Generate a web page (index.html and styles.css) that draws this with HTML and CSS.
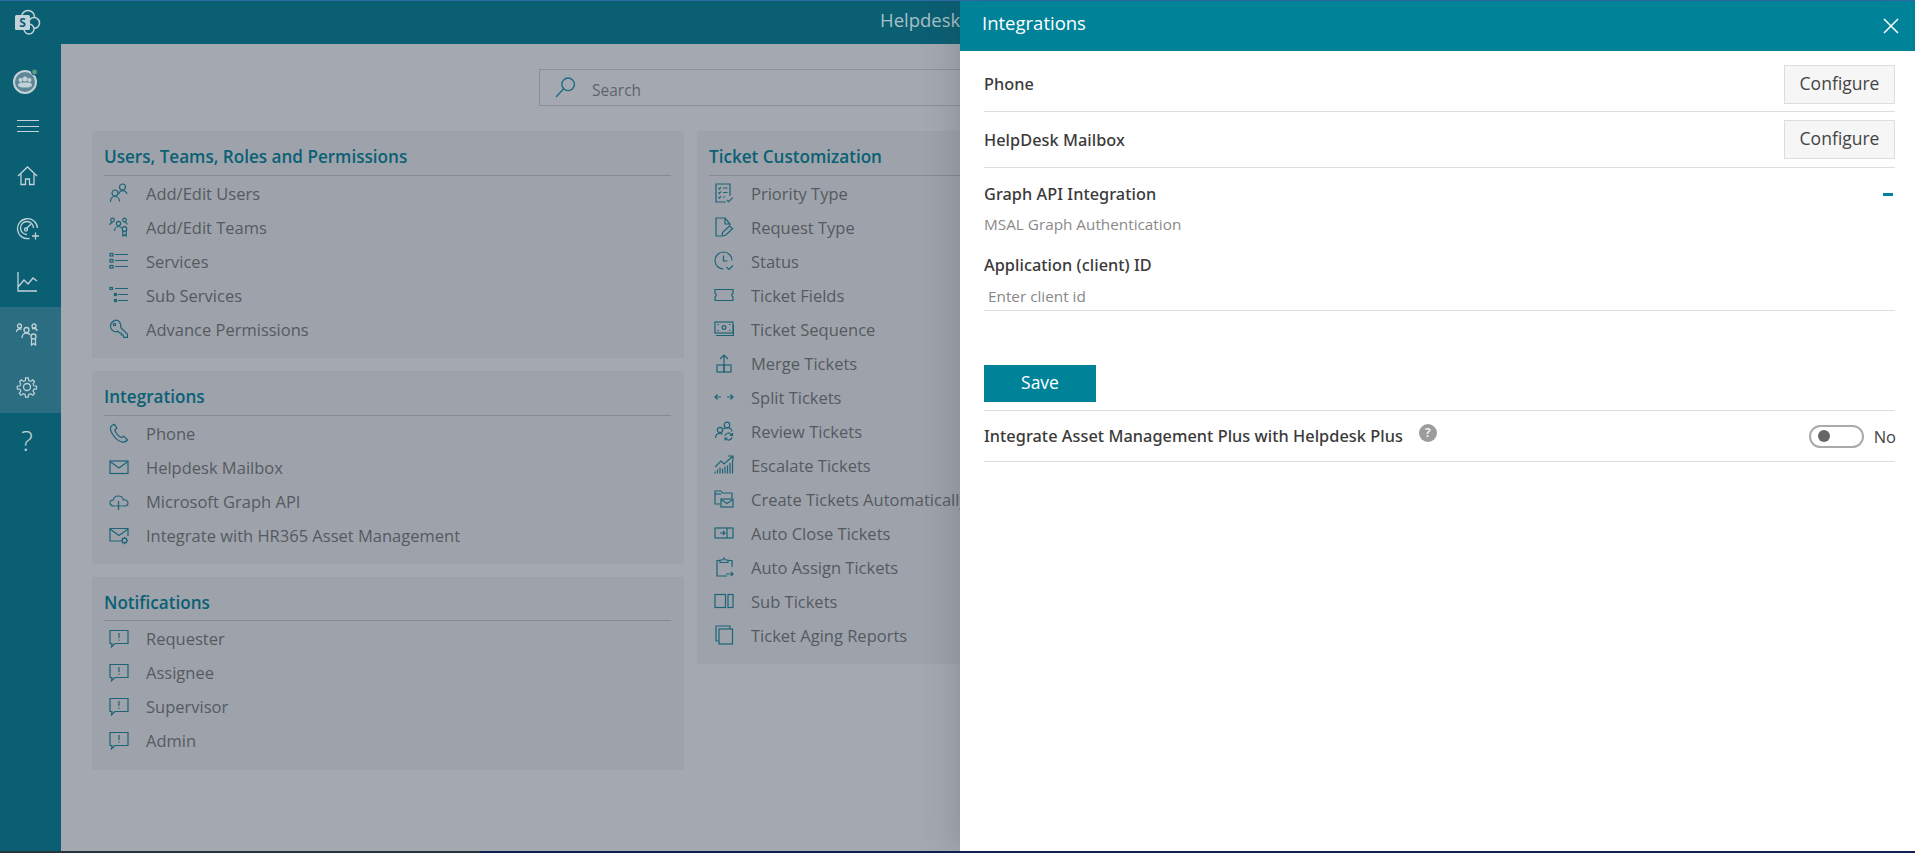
FILE: index.html
```html
<!DOCTYPE html>
<html lang="en">
<head>
  <meta charset="UTF-8">
  <meta name="viewport" content="width=device-width, initial-scale=1.0">
  <title>Helpdesk Plus - Integrations</title>
  <link rel="stylesheet" href="styles.css">
</head>
<body>
  <svg class="sprite" xmlns="http://www.w3.org/2000/svg">
    <symbol id="i-user" viewBox="0 0 20 20"><circle cx="13.500" cy="4" r="3"/><path d="M10 11c.4-2 1.800-3.300 3.700-3.300s3.600 1.300 4.300 3.300"/><circle cx="6" cy="10" r="3"/><path d="M1.500 19c0-3.400 2-5.500 4.500-5.500s4.500 2.100 4.500 5"/></symbol>
    <symbol id="i-team" viewBox="0 0 20 20"><circle cx="3.500" cy="3" r="1.800"/><circle cx="15.500" cy="3" r="1.800"/><circle cx="9.500" cy="6.500" r="2.200"/><path d="M1 8c0-1.500 1-2.400 2.500-2.400M18 7.500c0-1.300-1-2-2.500-2M5.500 14c0-2.500 1.800-4.500 4-4.500 1.200 0 2.300.6 3 1.500"/><circle cx="15.500" cy="12" r="2.300"/><path d="M13.800 14v5l1.700-1.300 1.700 1.300v-5"/></symbol>
    <symbol id="i-list" viewBox="0 0 20 20"><path d="M6 3.500h13M6 9.500h13M6 15.500h13"/><rect x="1" y="2.500" width="3" height="2.500"/><rect x="1" y="8.500" width="3" height="2.500"/><rect x="1" y="14.500" width="3" height="2.500"/></symbol>
    <symbol id="i-sublist" viewBox="0 0 20 20"><path d="M6 3.500h13M9 9.500h10M9 15.500h10"/><rect x="1" y="2.500" width="2.500" height="2"/><rect x="5.500" y="8.500" width="2" height="2"/><rect x="5.500" y="14.500" width="2" height="2"/></symbol>
    <symbol id="i-key" viewBox="0 0 20 20"><path d="M7.500 1.200a6 6 0 0 0-6 6c0 3 2.600 5.600 5.800 5.600l1.500-.5 1.700 1.700h1.800v1.800h1.800l.6 2.500h3.800v-3l-6.700-6.500c.8-3.800-1.800-7.600-4.300-7.600z"/><circle cx="5.500" cy="5.500" r="1.200"/></symbol>
    <symbol id="i-phone" viewBox="0 0 20 20"><path d="M5.500 1.200 3 2.500C.8 4 1.200 7 3 10.200c2 3.500 5 7 8.500 8.300 2.500.9 5.300.5 7-1.500l-3.600-3.800-2.600 1.300c-2.800-1-5.200-4.200-6.500-7.200l2-2.100z"/></symbol>
    <symbol id="i-mail" viewBox="0 0 20 20"><rect x="1" y="4" width="18" height="12.500"/><path d="m1 4.500 9 6.500 9-6.500"/></symbol>
    <symbol id="i-cloud" viewBox="0 0 20 20"><path d="M6 15H4.500C2.500 15 1 13.500 1 11.800S2.300 9 4.300 9c.4-2.500 2.700-4 5-4 2.500 0 4.500 1.500 5 3.800 2.400-.2 4.700.8 4.700 3.200 0 1.800-1.500 3-3.500 3H13"/><path d="M9.500 10v9M6.500 15h6"/></symbol>
    <symbol id="i-mailgear" viewBox="0 0 20 20"><path d="M12 16H1V3.500h18V11"/><path d="m1 4 9 6.500L19 4"/><circle cx="15.500" cy="15.500" r="2.300"/><path d="M15.500 11.800v1.400M15.500 17.800v1.400M11.800 15.500h1.400M17.800 15.500h1.400M13 13l1 1M17 17l1 1M18 13l-1 1M14 17l-1 1"/></symbol>
    <symbol id="i-chat" viewBox="0 0 20 20"><path d="M1 2.500h18v13H6L2.500 18.800l.5-3.300H1z"/><path d="M10 5v5M10 11.500v1.300"/></symbol>
    <symbol id="i-priority" viewBox="0 0 20 20"><path d="M16 13V1H2v18h10"/><path d="m4.500 5 1 1 1.500-2M4.500 9.500l1 1 1.500-2M4.500 14l1 1 1.500-2M9 5h4.500M9 9.500h4.500M9 14h2M13 17l1.700 1.700 4-4"/></symbol>
    <symbol id="i-request" viewBox="0 0 20 20"><path d="M7 19H2V1h9l5 6v1.500M11 1v6h5"/><path d="m8 19 .5-3.500L15.500 9l3 2.800-7 6.500z"/></symbol>
    <symbol id="i-status" viewBox="0 0 20 20"><path d="M9.500 18A8.500 8.500 0 1 1 18 9.500"/><path d="M9.500 4.500v5.500h4M12.500 16l2.500 2.500 4-4"/></symbol>
    <symbol id="i-ticket" viewBox="0 0 20 20"><path d="M1 4.500h18v3.800a1.800 1.800 0 0 0 0 3.400v3.800H1v-3.800a1.800 1.800 0 0 0 0-3.400z"/></symbol>
    <symbol id="i-money" viewBox="0 0 20 20"><rect x="1" y="3" width="18" height="11"/><path d="M2 16.500h17.500V6"/><circle cx="10" cy="8.500" r="1.900"/><path d="M3.500 5.500h1.500M15 11.500h1.500M3.500 11.500h1.500M15 5.500h1.500"/></symbol>
    <symbol id="i-merge" viewBox="0 0 20 20"><rect x="3" y="12" width="7" height="7"/><rect x="10" y="12" width="7" height="7"/><path d="M10 12V2M6 6l4-4 4 4"/></symbol>
    <symbol id="i-split" viewBox="0 0 20 20"><path d="M1 10h6M3.500 7.500 1 10l2.500 2.500M13 10h6M16.500 7.500 19 10l-2.500 2.500"/></symbol>
    <symbol id="i-review" viewBox="0 0 20 20"><circle cx="13" cy="4" r="2.800"/><circle cx="6" cy="9" r="2.600"/><path d="M1.500 17c0-2.800 2-4.500 4.500-4.500 1 0 1.800.2 2.500.7M9.500 8c1-.8 2.200-1.300 3.500-1.300 2.500 0 4.500 1.300 5 3.800"/><path d="M11 15a3.500 3.500 0 0 1 6-1.800l1.200 1.200M18.500 12v2.500H16M18 16.500a3.500 3.500 0 0 1-6 1.300L11 17M11 19.500V17h2.500"/></symbol>
    <symbol id="i-escalate" viewBox="0 0 20 20"><path d="M1 18.500v-2M3.500 18.500v-4M6 18.500v-6M8.500 18.500v-5M11 18.500v-7M13.500 18.500v-8M16 18.500V8M18.500 18.500V6"/><path d="M1 12 7 6l3 3 8.500-7.500M14 1h5v5"/></symbol>
    <symbol id="i-folder" viewBox="0 0 20 20"><path d="M6 15H1V2h6l1.500 2H18v5"/><path d="M1 5h6"/><rect x="7" y="10" width="12" height="8"/><path d="m7 10.500 6 4 6-4"/></symbol>
    <symbol id="i-close" viewBox="0 0 20 20"><rect x="1" y="5" width="18" height="10"/><path d="M13 5v10M6 10h5M9 8l2 2-2 2"/></symbol>
    <symbol id="i-assign" viewBox="0 0 20 20"><path d="M18 10V3.500h-4M6 3.500H3v15.500h10"/><path d="M6 5.500V3h2.500l1.500-2 1.500 2H14v2.500zM12 17h7M17 15l2 2-2 2"/></symbol>
    <symbol id="i-sub" viewBox="0 0 20 20"><rect x="1" y="3.500" width="10.500" height="13"/><rect x="14" y="3.500" width="5" height="13"/></symbol>
    <symbol id="i-aging" viewBox="0 0 20 20"><path d="M16 4V1H2v15h3"/><rect x="5" y="4" width="13.500" height="15"/></symbol>
  </svg>

  <div class="topline"></div>

  <div class="app">
    <nav class="sidebar">
      <div class="logo">
        <svg width="27" height="27" viewBox="0 0 27 27"><circle cx="14" cy="8" r="6.500" fill="none" stroke="#c3d2d8" stroke-width="1.500"/><circle cx="20" cy="14" r="5.500" fill="#0a5f73" stroke="#c3d2d8" stroke-width="1.500"/><circle cx="15" cy="20" r="5" fill="#0a5f73" stroke="#c3d2d8" stroke-width="1.500"/><rect x="1" y="6" width="15" height="15" rx="1.500" fill="#c3d2d8"/><text x="8.500" y="18" class="logo-s">S</text></svg>
      </div>
      <div class="brand">
        <svg width="28" height="28" viewBox="0 0 28 28"><circle cx="13" cy="15" r="11" fill="#5f8796" stroke="#c3d2d8" stroke-width="2"/><circle cx="13" cy="12" r="2.500" fill="#c3d2d8"/><circle cx="8.500" cy="13" r="2" fill="#c3d2d8"/><circle cx="17.500" cy="13" r="2" fill="#c3d2d8"/><path d="M6 19c0-2.500 1.500-3.500 3-3.500h8c1.500 0 3 1 3 3.500l-3.500 1.500h-7z" fill="#c3d2d8"/><circle cx="22.500" cy="5" r="3" fill="#5d9a86" stroke="#0a5f73"/></svg>
      </div>
      <div class="burger"><span></span><span></span><span></span></div>
      <a class="nav-item"><svg class="nav-icon"><path d="M2 12 11.500 3 21 12M5 10v10.500h4.500V15h4v5.500H18V10"/></svg></a>
      <a class="nav-item"><svg class="nav-icon"><path d="M13.500 21.500A10 10 0 1 1 21.500 11M11 17.500a6.500 6.500 0 1 1 6.500-6.500M10 12l5-5"/><circle cx="10" cy="12.500" r="1.500"/><path d="M16 19h7M19.500 15.500v7"/></svg></a>
      <a class="nav-item"><svg class="nav-icon"><path d="M2 2v19h19M2 17l6-7 4 4 5-6 4 3"/></svg></a>
      <a class="nav-item active"><svg class="nav-icon"><circle cx="3.500" cy="3" r="2"/><circle cx="18" cy="3" r="2"/><circle cx="10.500" cy="7" r="2.500"/><path d="M.5 9c0-2 1.300-3 3-3h2M21 8c0-1.500-1-2.500-3-2.500h-2M6 15c0-3 2-5 4.500-5 1.500 0 2.800.7 3.500 2"/><circle cx="17.500" cy="13.500" r="2.500"/><path d="M15.500 16v6l2-1.500 2 1.500v-6"/></svg></a>
      <a class="nav-item active"><svg class="nav-icon"><circle cx="11" cy="11" r="3.500"/><path d="M9.500 1h3l.5 3 2 .9 2.500-1.700 2 2-1.700 2.500.9 2 3 .5v3l-3 .5-.9 2 1.700 2.500-2 2-2.500-1.700-2 .9-.5 3h-3l-.5-3-2-.9-2.500 1.700-2-2 1.700-2.500-.9-2-3-.5v-3l3-.5.9-2L2.800 5.200l2-2L7.300 4.900l2-.9z" transform="translate(1 1) scale(.9)"/></svg></a>
      <a class="nav-item help">?</a>
    </nav>

    <main class="main">
      <header class="appbar">Helpdesk</header>

      <div class="search">
        <svg class="search-icon" viewBox="0 0 20 20"><circle cx="12.500" cy="7" r="6"/><path d="M8 11.500 1 19"/></svg>
        <input class="search-input" type="text" placeholder="Search">
      </div>

      <div class="columns">
        <div class="column">
          <section class="card">
            <h3>Users, Teams, Roles and Permissions</h3>
            <ul>
              <li><svg><use href="#i-user"/></svg>Add/Edit Users</li>
              <li><svg><use href="#i-team"/></svg>Add/Edit Teams</li>
              <li><svg><use href="#i-list"/></svg>Services</li>
              <li><svg><use href="#i-sublist"/></svg>Sub Services</li>
              <li><svg><use href="#i-key"/></svg>Advance Permissions</li>
            </ul>
          </section>
          <section class="card">
            <h3>Integrations</h3>
            <ul>
              <li><svg><use href="#i-phone"/></svg>Phone</li>
              <li><svg><use href="#i-mail"/></svg>Helpdesk Mailbox</li>
              <li><svg><use href="#i-cloud"/></svg>Microsoft Graph API</li>
              <li><svg><use href="#i-mailgear"/></svg>Integrate with HR365 Asset Management</li>
            </ul>
          </section>
          <section class="card card-compact">
            <h3>Notifications</h3>
            <ul>
              <li><svg><use href="#i-chat"/></svg>Requester</li>
              <li><svg><use href="#i-chat"/></svg>Assignee</li>
              <li><svg><use href="#i-chat"/></svg>Supervisor</li>
              <li><svg><use href="#i-chat"/></svg>Admin</li>
            </ul>
          </section>
        </div>

        <div class="column">
          <section class="card">
            <h3>Ticket Customization</h3>
            <ul>
              <li><svg><use href="#i-priority"/></svg>Priority Type</li>
              <li><svg><use href="#i-request"/></svg>Request Type</li>
              <li><svg><use href="#i-status"/></svg>Status</li>
              <li><svg><use href="#i-ticket"/></svg>Ticket Fields</li>
              <li><svg><use href="#i-money"/></svg>Ticket Sequence</li>
              <li><svg><use href="#i-merge"/></svg>Merge Tickets</li>
              <li><svg><use href="#i-split"/></svg>Split Tickets</li>
              <li><svg><use href="#i-review"/></svg>Review Tickets</li>
              <li><svg><use href="#i-escalate"/></svg>Escalate Tickets</li>
              <li><svg><use href="#i-folder"/></svg>Create Tickets Automatically</li>
              <li><svg><use href="#i-close"/></svg>Auto Close Tickets</li>
              <li><svg><use href="#i-assign"/></svg>Auto Assign Tickets</li>
              <li><svg><use href="#i-sub"/></svg>Sub Tickets</li>
              <li><svg><use href="#i-aging"/></svg>Ticket Aging Reports</li>
            </ul>
          </section>
        </div>
      </div>
    </main>

    <aside class="panel">
      <div class="panel-head">
        <span>Integrations</span>
        <svg class="panel-x" viewBox="0 0 16 16"><path d="M1 1l14 14M15 1 1 15"/></svg>
      </div>
      <div class="panel-body">
        <div class="row row-phone">
          <label>Phone</label>
          <button class="btn-config">Configure</button>
        </div>
        <div class="row row-mail">
          <label>HelpDesk Mailbox</label>
          <button class="btn-config">Configure</button>
        </div>
        <div class="graph">
          <div class="graph-title">
            <label>Graph API Integration</label>
            <span class="minus"></span>
          </div>
          <p class="hint">MSAL Graph Authentication</p>
          <label class="field-label">Application (client) ID</label>
          <input class="field-input" type="text" placeholder="Enter client id">
          <button class="btn-save">Save</button>
        </div>
        <div class="row row-asset">
          <label>Integrate Asset Management Plus with Helpdesk Plus</label>
          <span class="help-dot">?</span>
          <span class="toggle"><span class="knob"></span></span>
          <span class="toggle-text">No</span>
        </div>
      </div>
    </aside>
  </div>

  <div class="taskbar"><span class="task-left"></span><span class="task-right"></span></div>
</body>
</html>
```

FILE: styles.css
```css
* {
  box-sizing: border-box;
}
html, body {
  margin: 0;
  height: 100%;
  overflow: hidden;
}
body {
  display: flex;
  flex-direction: column;
  height: 853px;
  font-family: "Open Sans", "Noto Sans", sans-serif;
  background: #a4a9b1;
}
.sprite {
  display: none;
}
.topline {
  height: 1px;
  background: #2f6aa8;
}
.app {
  position: relative;
  display: flex;
  flex: 1;
  min-height: 0;
}
.taskbar {
  display: flex;
  height: 2px;
}
.task-left {
  width: 480px;
  background: #26323c;
}
.task-right {
  flex: 1;
  background: #101e54;
}

/* left rail */
.sidebar {
  display: flex;
  flex-direction: column;
  flex: none;
  width: 61px;
  background: #0a5f73;
}
.logo {
  display: flex;
  justify-content: center;
  align-items: center;
  height: 43px;
  padding-right: 6px;
}
.logo-s {
  font-size: 12px;
  font-weight: 700;
  fill: #0a5f73;
  text-anchor: middle;
}
.brand {
  display: flex;
  justify-content: center;
  height: 60px;
  padding: 23px 9px 0 0;
}
.burger {
  display: flex;
  flex-direction: column;
  gap: 4.500px;
  height: 44px;
  padding: 16px 0 0 17px;
}
.burger span {
  width: 22px;
  height: 1px;
  background: #c3d2d8;
}
.nav-item {
  display: flex;
  justify-content: center;
  align-items: center;
  height: 53px;
  padding: 1px 7px 0 0;
  color: #c3d2d8;
}
.nav-item.active {
  background: #2b6e82;
}
.nav-icon {
  width: 23px;
  height: 23px;
  fill: none;
  stroke: currentColor;
  stroke-width: 1.300;
}
.help {
  font-size: 28px;
  font-weight: 300;
}

/* page behind the drawer */
.main {
  flex: 1;
  min-width: 0;
}
.appbar {
  height: 43px;
  padding-left: 819px;
  background: #0a5f73;
  color: #a8c0c9;
  font-size: 18.500px;
  line-height: 37px;
}
.search {
  display: flex;
  align-items: center;
  gap: 16px;
  width: 898px;
  height: 37px;
  margin: 25px 0 25px 478px;
  padding-left: 15px;
  border: 1px solid #8b9098;
}
.search-icon {
  width: 21px;
  height: 21px;
  fill: none;
  stroke: #1f6b80;
  stroke-width: 1.300;
}
.search-input {
  flex: 1;
  padding: 4px 0 0;
  border: 0;
  outline: 0;
  background: transparent;
  font: 15.500px "Open Sans", sans-serif;
}
.search-input::placeholder {
  color: #5f646b;
}
.columns {
  display: flex;
  align-items: flex-start;
  gap: 13px;
  padding-left: 31px;
}
.column {
  display: flex;
  flex-direction: column;
  gap: 13px;
  width: 592px;
}
.card {
  padding: 0 13px 12px 12px;
  background: #9ea3ab;
}
.card h3 {
  height: 45px;
  margin: 0;
  border-bottom: 1px solid #868b93;
  color: #0a6075;
  font-size: 17.100px;
  font-weight: 600;
  line-height: 52px;
}
.card-compact {
  padding-bottom: 13px;
}
.card-compact h3 {
  height: 44px;
}
.card ul {
  margin: 0;
  padding: 0;
  list-style: none;
}
.card li {
  display: flex;
  align-items: center;
  gap: 17px;
  height: 34px;
  padding-left: 5px;
  color: #555a60;
  font-size: 16.500px;
  white-space: nowrap;
}
.card svg {
  flex: none;
  width: 20px;
  height: 20px;
  fill: none;
  stroke: #1d6478;
  stroke-width: 1.200;
}

/* drawer */
.panel {
  position: absolute;
  top: 0;
  right: 0;
  bottom: 0;
  width: 955px;
  background: #fff;
  box-shadow: -8px 0 30px rgba(50, 55, 65, .18);
}
.panel-head {
  display: flex;
  justify-content: space-between;
  align-items: center;
  height: 50px;
  padding: 0 16px 7px 22px;
  background: #008299;
  color: #fff;
  font-size: 18.500px;
}
.panel-x {
  width: 16px;
  height: 16px;
  margin-top: 7px;
  fill: none;
  stroke: #fff;
  stroke-width: 1.500;
}
.panel-body {
  padding: 0 20px 0 24px;
}
.panel label {
  color: #3a3a3a;
  font-family: "Noto Sans", sans-serif;
  font-size: 16.300px;
  font-weight: 500;
  letter-spacing: .05px;
}
.row {
  display: flex;
  align-items: center;
  border-bottom: 1px solid #ddd;
}
.row > label {
  flex: 1;
}
.row-phone {
  height: 61px;
  padding-top: 6px;
}
.row-mail {
  height: 56px;
}
.btn-config {
  width: 111px;
  height: 39px;
  padding: 0 0 3px;
  border: 1px solid #ddd;
  background: #f6f6f6;
  color: #444;
  font: 17.500px "Open Sans", sans-serif;
}
.graph {
  padding: 15px 0 8px;
  border-bottom: 1px solid #ddd;
}
.graph-title {
  display: flex;
  justify-content: space-between;
  align-items: center;
  height: 22px;
}
.minus {
  width: 10px;
  height: 3px;
  margin-right: 2px;
  background: #008299;
}
.hint {
  height: 20px;
  margin: 9px 0 0;
  color: #8a8a8a;
  font-size: 15.300px;
  line-height: 20px;
}
.field-label {
  display: block;
  height: 22px;
  margin-top: 20px;
}
.field-input {
  display: block;
  width: 100%;
  height: 29px;
  margin-top: 6px;
  padding: 0 4px;
  border: 0;
  border-bottom: 1px solid #ddd;
  outline: 0;
  font: 15.300px "Open Sans", sans-serif;
}
.field-input::placeholder {
  color: #888;
}
.btn-save {
  display: block;
  width: 112px;
  height: 37px;
  margin-top: 54px;
  padding: 0 0 3px;
  border: 0;
  background: #008299;
  color: #fff;
  font: 17.500px "Open Sans", sans-serif;
}
.row-asset {
  height: 51px;
}
.row-asset > label {
  flex: none;
}
.help-dot {
  flex: none;
  width: 18px;
  height: 18px;
  margin: -7px auto 0 16px;
  border-radius: 50%;
  background: #9c9c9c;
  color: #eee;
  font-size: 12px;
  font-weight: 700;
  line-height: 18px;
  text-align: center;
}
.toggle {
  display: flex;
  align-items: center;
  width: 55px;
  height: 23px;
  padding-left: 7px;
  border: 2px solid #aaa;
  border-radius: 12px;
}
.knob {
  width: 12px;
  height: 12px;
  border-radius: 50%;
  background: #666;
}
.toggle-text {
  margin: 0 -1px 0 10px;
  color: #444;
  font-size: 16.500px;
}
```
